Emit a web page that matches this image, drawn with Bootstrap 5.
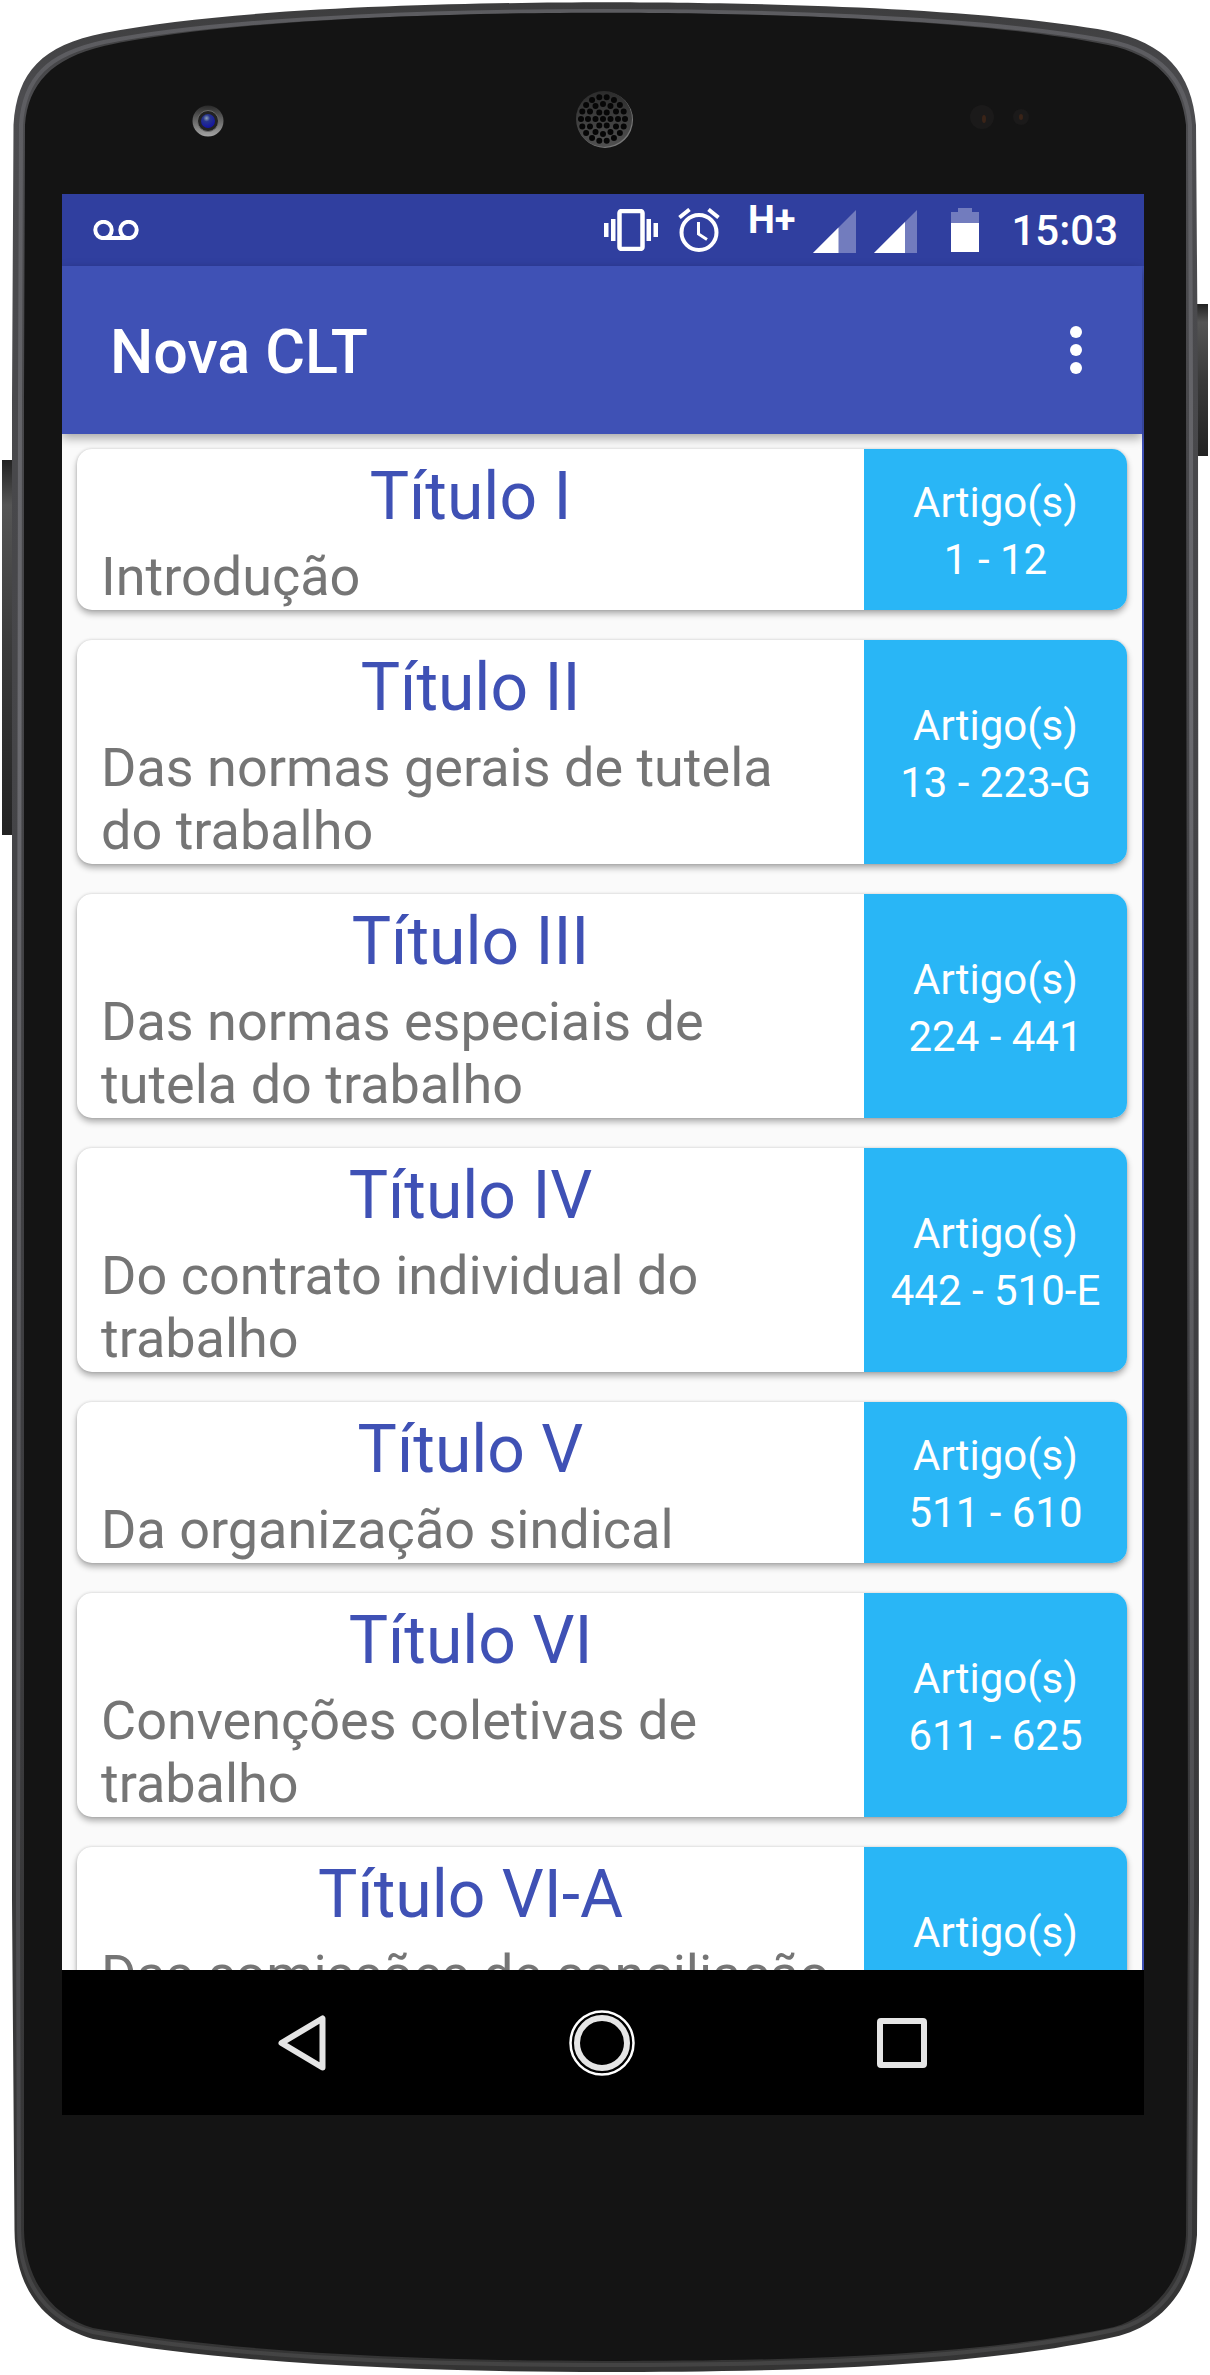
<!DOCTYPE html>
<html lang="pt-BR">
<head>
<meta charset="utf-8">
<meta name="viewport" content="width=device-width, initial-scale=1">
<title>Nova CLT</title>
<link href="https://cdn.jsdelivr.net/npm/bootstrap@5.3.0/dist/css/bootstrap.min.css" rel="stylesheet">
<style>
  body { font-family: Roboto, "Liberation Sans", sans-serif; background: #fff; }
  svg { display: block; flex: none; }
  .device { height: 100vh; padding: 194px 66px 260px 62px; }
  .device-art { z-index: 0; }
  .screen { z-index: 1; background: #3f51b5; min-height: 0; }
  .status { flex: none; height: 72px; background: #303f9f; padding: 0 26px 0 31px; color: #fff; }
  .net-type { font-size: 38px; line-height: 38px; font-weight: 700; padding-bottom: 20px; }
  .clock { font-size: 42px; line-height: 50px; font-weight: 500; padding-top: 2px; }
  .appbar { flex: none; height: 168px; background: #3f51b5; color: #fff; padding: 0 35px 0 48px; z-index: 2; box-shadow: 0 4px 10px rgba(0,0,0,.35); margin-right: 2px; }
  .appbar h1 { font-size: 61px; line-height: 70px; font-weight: 500; padding-top: 4px; }
  .chapters { background: #fafafa; padding: 15px 15px 0; gap: 30px; margin-right: 2px; min-height: 0; }
  .chapter { flex: none; border-radius: 15px; background: #fff; box-shadow: 0 4px 6px rgba(0,0,0,.3), 0 0 3px rgba(0,0,0,.16); text-decoration: none; }
  .chapter-text { padding: 9px 24px 2px; }
  .chapter h2 { font-size: 66px; line-height: 77px; font-weight: 400; color: #3f51b5; margin-bottom: 10px; }
  .chapter p { font-size: 54px; line-height: 63px; color: #757575; }
  .articles { flex: none; width: 263px; padding-top: 3px; background: #29b6f6; color: #fff; font-size: 42px; line-height: 57px; border-radius: 0 15px 15px 0; }
  .keys { flex: none; height: 145px; background: #000; padding-right: 2px; }
  .keys .btn { width: 300px; }
</style>
<script src="https://cdn.jsdelivr.net/npm/bootstrap@5.3.0/dist/js/bootstrap.bundle.min.js"></script>
</head>
<body>
<div class="device position-relative d-flex flex-column overflow-hidden">
  <svg class="device-art position-absolute top-0 start-0 w-100 h-100" viewBox="0 0 1210 2375" preserveAspectRatio="none" aria-hidden="true">
    <defs>
      <linearGradient id="key" x1="0" y1="0" x2="0" y2="1"><stop offset="0" stop-color="#222"/><stop offset=".12" stop-color="#555"/><stop offset=".5" stop-color="#3a3a3a"/><stop offset="1" stop-color="#222"/></linearGradient>
      <linearGradient id="rim" x1="0" y1="0" x2="0" y2="1"><stop offset="0" stop-color="#3c3c3d"/><stop offset=".04" stop-color="#4c4c4f"/><stop offset=".6" stop-color="#3e3e41"/><stop offset="1" stop-color="#343434"/></linearGradient>
      <linearGradient id="edge" x1="0" y1="0" x2="0" y2="1"><stop offset="0" stop-color="#5c5c60"/><stop offset=".3" stop-color="#6a6a6f"/><stop offset=".9" stop-color="#48484b"/><stop offset="1" stop-color="#444"/></linearGradient>
      <linearGradient id="lens" x1="0" y1="0" x2="0" y2="1"><stop offset="0" stop-color="#2a2a2a"/><stop offset="1" stop-color="#a5a5a5"/></linearGradient>
      <linearGradient id="grille" x1="0" y1="0" x2="0" y2="1"><stop offset="0" stop-color="#2c2c2c"/><stop offset="1" stop-color="#505050"/></linearGradient>
      <radialGradient id="glass" cx=".4" cy=".3" r=".7"><stop offset="0" stop-color="#8fa3b8"/><stop offset=".35" stop-color="#27358c"/><stop offset="1" stop-color="#1414a0"/></radialGradient>
    </defs>
    <rect x="2" y="460" width="14" height="375" fill="url(#key)"/>
    <rect x="1194" y="304" width="14" height="152" fill="url(#key)"/>
    <path fill="url(#rim)" d="M12 400L13.500 125C17 72 42 45 104 33C240 6 480 2.500 605 2.300C730 2.500 970 6 1108 31C1165 43 1192 72 1196 125L1198 400L1199 1900L1197 2235C1193 2290 1160 2327 1114 2337C970 2369 760 2372 605 2372C450 2372 240 2366 93 2339C45 2325 15 2290 14.500 2230L12 1900Z"/>
    <path fill="none" stroke="url(#edge)" stroke-width="4" d="M20 400L21 125C24 78 48 54 104 42C240 15 480 11 605 11C730 11 970 15 1108 41C1158 51 1186 78 1190 125L1191 400L1192 1900L1190 2235C1188 2286 1154 2321 1114 2330C970 2362 760 2365 605 2365C450 2365 240 2359 93 2332C50 2321 20 2286 19 2230L18 1900Z"/>
    <path fill="#141414" d="M24 400L25 125C28 84 52 58 104 46C240 17 480 12.700 605 12.700C730 12.700 970 17 1108 45C1156 55 1182 82 1186 125L1186 400L1188 1900L1186 2235C1184 2282 1150 2317 1114 2327C970 2358 760 2361 605 2361C450 2361 240 2354 93 2328C54 2317 25 2282 24 2230L24 1900Z"/>
    <circle cx="208" cy="121" r="15.500" fill="url(#lens)"/>
    <circle cx="208" cy="121" r="10.500" fill="#222" stroke="#6a6a6a" stroke-width="1"/>
    <circle cx="208" cy="121" r="7" fill="url(#glass)"/>
    <circle cx="605" cy="120" r="28" fill="#777"/>
    <circle cx="604" cy="119" r="28" fill="url(#grille)"/>
    <g fill="none" stroke="#060606" stroke-width="6" stroke-linecap="round">
      <circle cx="603" cy="119" r="7.500" pathLength="6" stroke-dasharray="0 1"/>
      <circle cx="603" cy="119" r="15" pathLength="12" stroke-dasharray="0 1"/>
      <circle cx="603" cy="119" r="22" pathLength="18" stroke-dasharray="0 1"/>
    </g>
    <circle cx="603" cy="119" r="3" fill="#060606"/>
    <circle cx="982" cy="117" r="12" fill="#1b1a1a"/><circle cx="1021" cy="117" r="8" fill="#1b1a1a"/>
    <ellipse cx="984" cy="119" rx="2" ry="4" fill="#3a2418"/><ellipse cx="1021" cy="117" rx="2" ry="3" fill="#3a2418"/>
  </svg>

  <div class="screen position-relative d-flex flex-column flex-grow-1 overflow-hidden">
    <div class="status d-flex align-items-center">
      <svg class="me-auto" width="46" height="20" viewBox="0 0 46 20" fill="none" stroke="#fff" stroke-width="4" role="img" aria-label="Correio de voz"><circle cx="10.500" cy="10" r="8.200"/><circle cx="35.500" cy="10" r="8.200"/><path d="M10 18H36"/></svg>
      <svg width="54" height="42" viewBox="0 0 54 42" fill="#fff" role="img" aria-label="Vibrar"><rect x="15.500" y="2" width="23" height="38" rx="2" fill="none" stroke="#fff" stroke-width="4.500"/><path d="M0 14h4.500v14H0zM7 10h4.500v22H7zM42.500 10H47v22h-4.500zM49.500 14H54v14h-4.500z"/></svg>
      <svg class="ms-3 me-3" width="50" height="44" viewBox="0 0 50 44" fill="none" stroke="#fff" stroke-width="4" role="img" aria-label="Alarme"><circle cx="25" cy="24.500" r="17.500"/><path d="M5.500 9.500L15.500 1.500M44.500 9.500L34.500 1.500"/><path d="M24.500 14V26L33 31.500" stroke-width="3"/></svg>
      <span class="net-type ms-2 me-3">H+</span>
      <svg width="45" height="46" viewBox="-2 -3 45 46" fill="#fff" role="img" aria-label="Sinal 1"><path d="M43 0V43H0Z" opacity=".32"/><path d="M25.500 17.500V43H0Z"/></svg>
      <svg class="ms-3" width="45" height="46" viewBox="-2 -3 45 46" fill="#fff" role="img" aria-label="Sinal 2"><path d="M43 0V43H0Z" opacity=".32"/><path d="M31 12V43H0Z"/></svg>
      <svg class="mx-4" width="46" height="44" viewBox="-10 0 46 44" fill="#fff" role="img" aria-label="Bateria"><path d="M7 0H21V4H28V15H0V4H7Z" opacity=".32"/><path d="M0 15H28V44H0Z"/></svg>
      <span class="clock">15:03</span>
    </div>

    <header class="appbar position-relative d-flex align-items-center justify-content-between">
      <h1 class="m-0">Nova CLT</h1>
      <button type="button" class="btn border-0 p-3" aria-label="Mais opções"><svg width="30" height="48" viewBox="0 0 30 48" fill="#fff"><circle cx="15" cy="6" r="6"/><circle cx="15" cy="24" r="6"/><circle cx="15" cy="42" r="6"/></svg></button>
    </header>

    <main class="chapters d-flex flex-column flex-grow-1 overflow-hidden">
      <a href="#" class="chapter d-flex"><div class="chapter-text flex-grow-1"><h2 class="mt-0 text-center">Título I</h2><p class="m-0">Introdução</p></div><div class="articles d-flex flex-column justify-content-center text-center"><span>Artigo(s)</span><span>1 - 12</span></div></a>
      <a href="#" class="chapter d-flex"><div class="chapter-text flex-grow-1"><h2 class="mt-0 text-center">Título II</h2><p class="m-0">Das normas gerais de tutela do trabalho</p></div><div class="articles d-flex flex-column justify-content-center text-center"><span>Artigo(s)</span><span>13 - 223-G</span></div></a>
      <a href="#" class="chapter d-flex"><div class="chapter-text flex-grow-1"><h2 class="mt-0 text-center">Título III</h2><p class="m-0">Das normas especiais de tutela do trabalho</p></div><div class="articles d-flex flex-column justify-content-center text-center"><span>Artigo(s)</span><span>224 - 441</span></div></a>
      <a href="#" class="chapter d-flex"><div class="chapter-text flex-grow-1"><h2 class="mt-0 text-center">Título IV</h2><p class="m-0">Do contrato individual do trabalho</p></div><div class="articles d-flex flex-column justify-content-center text-center"><span>Artigo(s)</span><span>442 - 510-E</span></div></a>
      <a href="#" class="chapter d-flex"><div class="chapter-text flex-grow-1"><h2 class="mt-0 text-center">Título V</h2><p class="m-0">Da organização sindical</p></div><div class="articles d-flex flex-column justify-content-center text-center"><span>Artigo(s)</span><span>511 - 610</span></div></a>
      <a href="#" class="chapter d-flex"><div class="chapter-text flex-grow-1"><h2 class="mt-0 text-center">Título VI</h2><p class="m-0">Convenções coletivas de trabalho</p></div><div class="articles d-flex flex-column justify-content-center text-center"><span>Artigo(s)</span><span>611 - 625</span></div></a>
      <a href="#" class="chapter d-flex"><div class="chapter-text flex-grow-1"><h2 class="mt-0 text-center">Título VI-A</h2><p class="m-0">Das comissões de conciliação prévia</p></div><div class="articles d-flex flex-column justify-content-center text-center"><span>Artigo(s)</span><span>625-A - 625-H</span></div></a>
    </main>

    <nav class="keys d-flex justify-content-center align-items-center" aria-label="Navegação do sistema">
      <button type="button" class="btn border-0 p-0 d-flex justify-content-center" aria-label="Voltar"><svg width="48" height="56" viewBox="0 0 48 56" fill="none" stroke="#e5e5e5" stroke-width="6" stroke-linejoin="round"><path d="M44.500 3.500V52.500L3.500 28Z"/></svg></button>
      <button type="button" class="btn border-0 p-0 d-flex justify-content-center" aria-label="Início"><svg width="66" height="66" viewBox="0 0 66 66" fill="none"><circle cx="33" cy="33" r="31.500" stroke="#fff" stroke-width="2.500"/><circle cx="33" cy="33" r="25" stroke="#e5e5e5" stroke-width="6"/></svg></button>
      <button type="button" class="btn border-0 p-0 d-flex justify-content-center" aria-label="Recentes"><svg width="50" height="50" viewBox="0 0 50 50" fill="none" stroke="#e5e5e5" stroke-width="6"><rect x="3" y="3" width="44" height="44" rx="1"/></svg></button>
    </nav>
  </div>
</div>
</body>
</html>
